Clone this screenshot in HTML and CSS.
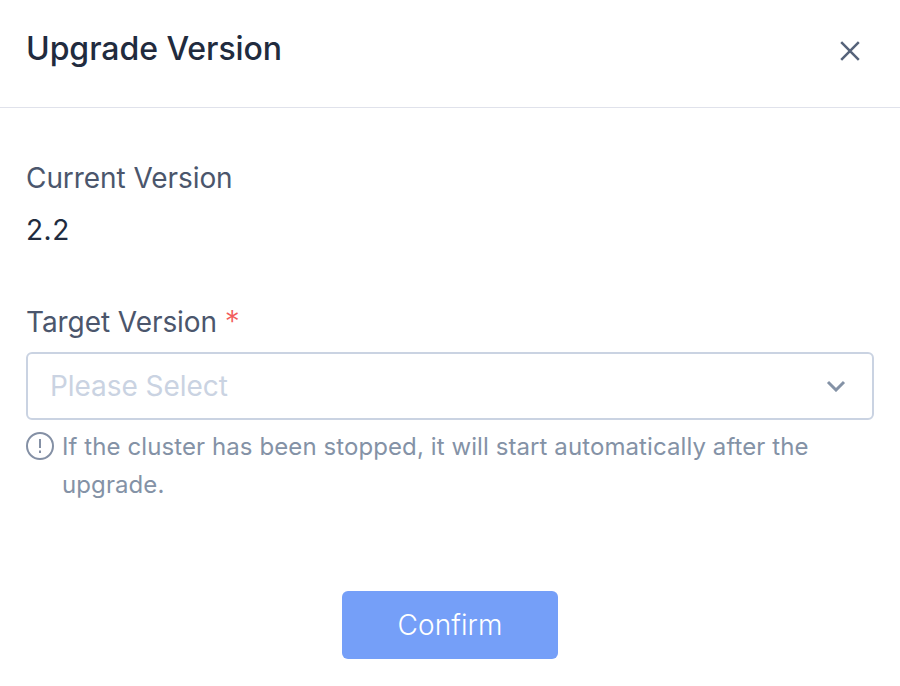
FILE: index.html
```html
<!DOCTYPE html>
<html lang="en">
<head>
<meta charset="utf-8">
<title>Upgrade Version</title>
<link rel="stylesheet" href="styles.css">
</head>
<body>
<main class="dialog">
  <header class="header">
    <h1 class="title">Upgrade Version</h1>
    <button class="close" aria-label="Close"><svg width="20" height="20" viewBox="0 0 20 20"><path d="M1.2 1.2 18.8 18.8M18.8 1.2 1.2 18.8"/></svg></button>
  </header>
  <section class="body">
    <div class="label">Current Version</div>
    <div class="value">2.2</div>
    <div class="label target">Target Version <span class="required">*</span></div>
    <div class="select"><span class="placeholder">Please Select</span><svg class="chevron" width="20" height="12" viewBox="0 0 20 12"><path d="M2 2 10 10 18 2"/></svg></div>
    <div class="hint">
      <svg class="info" width="28" height="28" viewBox="0 0 28 28"><circle cx="14" cy="14" r="13"/><path d="M14 7v9M14 18.5v2.5"/></svg>
      <p class="hint-text">If the cluster has been stopped, it will start automatically after the upgrade.</p>
    </div>
  </section>
  <footer class="footer"><button class="confirm">Confirm</button></footer>
</main>
</body>
</html>
```
FILE: styles.css
```css
* { box-sizing: border-box; }
body { margin: 0; background: #fff; font-family: Inter, sans-serif; font-weight: 400; color: #212b3e; }
.dialog { width: 900px; height: 686px; overflow: hidden; }
.header { display: flex; justify-content: space-between; height: 108px; padding: 29px 40px 0 26px; border-bottom: 1px solid #e0e2eb; }
.title { margin: 0; font-size: 32px; line-height: 40px; font-weight: 500; letter-spacing: -0.05px; }
.close { display: block; width: 20px; height: 20px; margin-top: 12px; padding: 0; border: 0; background: none; }
svg { display: block; flex: none; fill: none; }
.close svg { stroke: #56637a; stroke-width: 2.5; }
.body { padding: 50px 26px 0; }
.label { font-size: 28px; line-height: 40px; letter-spacing: -0.07px; color: #4b566c; }
.value { margin-top: 12px; font-size: 28px; line-height: 40px; letter-spacing: 0.5px; }
.target { margin-top: 52px; }
.required { color: #f25c5c; font-size: 30px; font-weight: 300; line-height: 1; }
.select { display: flex; align-items: center; justify-content: space-between; height: 68px; margin-top: 10px; padding: 0 26px 0 22px; border: 2px solid #cad3e2; border-radius: 6px; }
.placeholder { font-size: 28px; line-height: 40px; letter-spacing: -0.06px; color: #cad3e2; }
.chevron { stroke: #8492a6; stroke-width: 3; }
.hint { display: flex; gap: 8px; margin-top: 8px; }
.info { margin-top: 4px; stroke: #8490a5; stroke-width: 2; }
.hint-text { margin: 0; font-size: 24px; line-height: 38px; letter-spacing: 0.09px; color: #8492a6; }
.footer { display: flex; justify-content: center; margin-top: 87px; }
.confirm { width: 216px; height: 68px; padding: 0; border: 0; border-radius: 6px; background: #759ff8; color: #fff; font: 300 28px/40px Inter, sans-serif; letter-spacing: 0.05px; }
```
